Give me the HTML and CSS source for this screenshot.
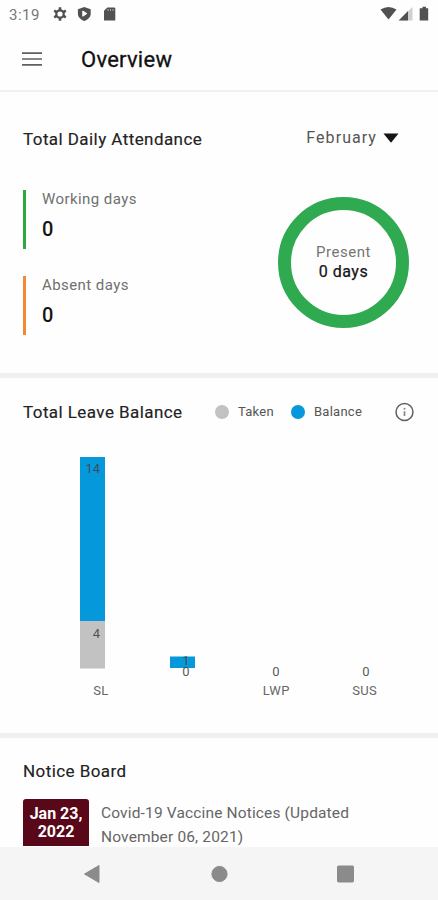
FILE: index.html
```html
<!DOCTYPE html>
<html lang="en">
<head>
<meta charset="utf-8">
<title>Overview</title>
<link rel="stylesheet" href="styles.css">
</head>
<body>
<div class="screen">
  <div class="status">
    <span class="clock">3:19</span>
    <svg class="status-left" width="66" height="16" viewBox="0 0 66 16" fill="none">
      <circle cx="8" cy="8" r="3.700" stroke="#515151" stroke-width="2.200"/>
      <path d="M8 1.300v2.800M8 11.900v2.800M2.200 4.700l2.400 1.400M11.400 9.900l2.400 1.400M2.200 11.300l2.400-1.400M11.400 6.100l2.400-1.400" stroke="#515151" stroke-width="2.600"/>
      <path d="M32.300.900l6.400 2.400v4.500c0 3.300-2.700 5.900-6.400 7.300-3.700-1.400-6.400-4-6.400-7.300V3.300z" fill="#515151"/>
      <path d="M30.800 5l4 2.600-4 2.600z" fill="#fff" stroke="#fff" stroke-linejoin="round"/>
      <path d="M55.300 1.500h6.700a1.300 1.300 0 0 1 1.300 1.300v11.700H52V4.800z" fill="#515151"/>
      <path d="M56 3v2M58.500 3v2M61 3v2" stroke="#a6a6a6" stroke-width="1.100"/>
    </svg>
    <svg class="status-right" width="50" height="16" viewBox="0 0 50 16">
      <path d="M.500 3.500Q8.500-1.500 16.500 3.500L8.500 13.500z" fill="#515151"/>
      <path d="M18.700 14.500L32.500 1v13.500z" fill="#cfcfcf"/>
      <path d="M18.700 14.500L28 5v9.500z" fill="#515151"/>
      <path d="M42.500.700h3.500v1.600h2.200v12.300h-8.500V2.300h2.800z" fill="#515151"/>
    </svg>
  </div>
  <header class="appbar">
    <svg width="20" height="14" viewBox="0 0 20 14"><path d="M0 1.200h20M0 7h20M0 12.900h20" stroke="#606060" stroke-width="1.700"/></svg>
    <h1>Overview</h1>
  </header>

  <section class="attendance">
    <div class="attendance-head">
      <h2>Total Daily Attendance</h2>
      <div class="month"><span>February</span><svg width="16" height="10" viewBox="0 0 16 10"><path d="M.500.500h15L8 9.700z" fill="#151515"/></svg></div>
    </div>
    <div class="attendance-body">
      <div class="stats">
        <div class="stat stat-working"><span class="label">Working days</span><b>0</b></div>
        <div class="stat stat-absent"><span class="label">Absent days</span><b>0</b></div>
      </div>
      <div class="ring"><span class="present">Present</span><span class="days">0 days</span></div>
    </div>
  </section>

  <section class="leave">
    <div class="leave-head">
      <h2 class="t-leave">Total Leave Balance</h2>
      <i class="dot dot-taken"></i><span class="key k-taken">Taken</span>
      <i class="dot dot-balance"></i><span class="key">Balance</span>
      <svg class="info" width="20" height="20" viewBox="0 0 20 20" fill="none"><circle cx="10.500" cy="10" r="8.500" stroke="#606060" stroke-width="1.500"/><path d="M10.500 9.300v4.700" stroke="#888" stroke-width="1.700"/><circle cx="10.500" cy="6.700" r="1" fill="#888"/></svg>
    </div>
    <svg class="chart" width="438" height="290" viewBox="0 440 438 290">
      <rect x="80" y="457" width="25" height="164" fill="#0599dc"/>
      <rect x="80" y="621" width="25" height="47.500" fill="#c2c2c2"/>
      <rect x="170" y="656.500" width="25" height="11.500" fill="#0599dc"/>
      <g class="values">
        <text x="92.700" y="473">14</text>
        <text x="96.500" y="638">4</text>
        <text x="186" y="664.500">1</text>
        <text x="186" y="676">0</text>
        <text x="276" y="676">0</text>
        <text x="366" y="676">0</text>
      </g>
      <g class="axis">
        <text x="101" y="695">SL</text>
        <text x="276.300" y="695">LWP</text>
        <text x="364.700" y="695">SUS</text>
      </g>
    </svg>
  </section>

  <section class="notices">
    <h2>Notice Board</h2>
    <div class="notice">
      <div class="date">Jan 23,<br>2022</div>
      <p>Covid-19 Vaccine Notices (Updated<br>November 06, 2021)</p>
    </div>
  </section>

  <nav class="navbar">
    <svg width="438" height="53" viewBox="0 0 438 53" fill="#8b8b8b" stroke="#8b8b8b" stroke-linejoin="round">
      <path d="M84.500 27L99 18.500v17z"/>
      <circle cx="219.500" cy="27" r="7.600"/>
      <rect x="337.500" y="19" width="16" height="16" rx="1"/>
    </svg>
  </nav>
</div>
</body>
</html>
```
FILE: styles.css
```css
* { box-sizing: border-box; margin: 0; padding: 0; }
body { background: #fff; font-family: Roboto, "Liberation Sans", sans-serif; color: #222; }
.screen { width: 438px; height: 900px; display: flex; flex-direction: column; overflow: hidden; background: #fefefe; }
svg { display: block; flex: none; }
h1, h2 { font-weight: 400; white-space: nowrap; }
h2 { font-size: 17px; line-height: 22px; color: #222; letter-spacing: 0.43px; -webkit-text-stroke: 0.15px #222; }

.status { flex: none; height: 28px; display: flex; align-items: center; padding: 0 8px 0 9px; }
.clock { width: 43px; font-size: 15px; line-height: 20px; padding-top: 1px; color: #777; letter-spacing: 0.5px; }
.status-left { margin-right: auto; }

.appbar { flex: none; height: 64px; display: flex; align-items: center; gap: 39px; padding: 0 22px; border-bottom: 2px solid #f0f0f0; }
.appbar h1 { font-size: 22px; line-height: 30px; padding-top: 2px; color: #111; letter-spacing: 0.25px; -webkit-text-stroke: 0.3px #111; }

.attendance { flex: none; height: 286px; padding: 36px 29px 0 23px; border-bottom: 5px solid #f0f0f3; }
.attendance-head { display: flex; justify-content: space-between; height: 62px; }
.month { display: flex; align-items: center; height: 20px; gap: 6px; padding-right: 10px; font-size: 16px; color: #555; letter-spacing: 1.05px; }
.month span { margin-top: -2px; }
.attendance-body { display: flex; justify-content: space-between; }
.stats { display: flex; flex-direction: column; gap: 27px; }
.stat { height: 59px; padding-left: 16px; border-left: 3px solid; display: flex; flex-direction: column; }
.stat-working { border-color: #2fa63e; }
.stat-absent { border-color: #f28a35; }
.label { font-size: 15px; line-height: 18px; color: #707070; letter-spacing: 0.43px; }
.stat b { margin-top: 8px; font-size: 20px; line-height: 26px; font-weight: 500; color: #151515; }
.ring { width: 131px; height: 131px; margin-top: 7px; padding-bottom: 2px; border: 13px solid #30aa50; border-radius: 50%; display: flex; flex-direction: column; align-items: center; justify-content: center; }
.present { font-size: 15px; line-height: 20px; color: #757575; letter-spacing: 0.55px; }
.days { font-size: 16px; line-height: 20px; color: #151515; letter-spacing: 0.5px; -webkit-text-stroke: 0.25px #151515; }

.leave { flex: none; height: 360px; border-bottom: 5px solid #f0f0f3; }
.leave-head { display: flex; align-items: center; height: 62px; padding: 5px 24px 0 23px; }
.t-leave { width: 192px; }
.dot { width: 14px; height: 14px; border-radius: 50%; flex: none; margin-right: 9px; }
.dot-taken { background: #c2c2c2; }
.dot-balance { background: #0599dc; }
.key { font-size: 13px; line-height: 16px; padding-top: 1px; color: #555; letter-spacing: 0.25px; }
.k-taken { width: 53px; }
.info { margin-left: auto; }
.chart text { text-anchor: middle; }
.values { font-size: 13px; fill: #444; fill-opacity: 0.9; }
.axis { font-size: 13px; fill: #666; letter-spacing: 0.4px; }

.notices { flex: none; height: 109px; padding: 22px 23px 0; overflow: hidden; }
.notice { display: flex; gap: 12px; margin-top: 17px; }
.date { flex: none; width: 66px; height: 47px; padding-top: 6px; border-radius: 3px 3px 0 0; background: #580818; color: #fff; text-align: center; font-size: 16px; line-height: 18px; font-weight: 700; }
.notice p { font-size: 15.5px; line-height: 23.5px; color: #666; white-space: nowrap; padding-top: 3px; letter-spacing: 0.15px; }

.navbar { flex: none; height: 53px; background: #f5f5f5; }
```
